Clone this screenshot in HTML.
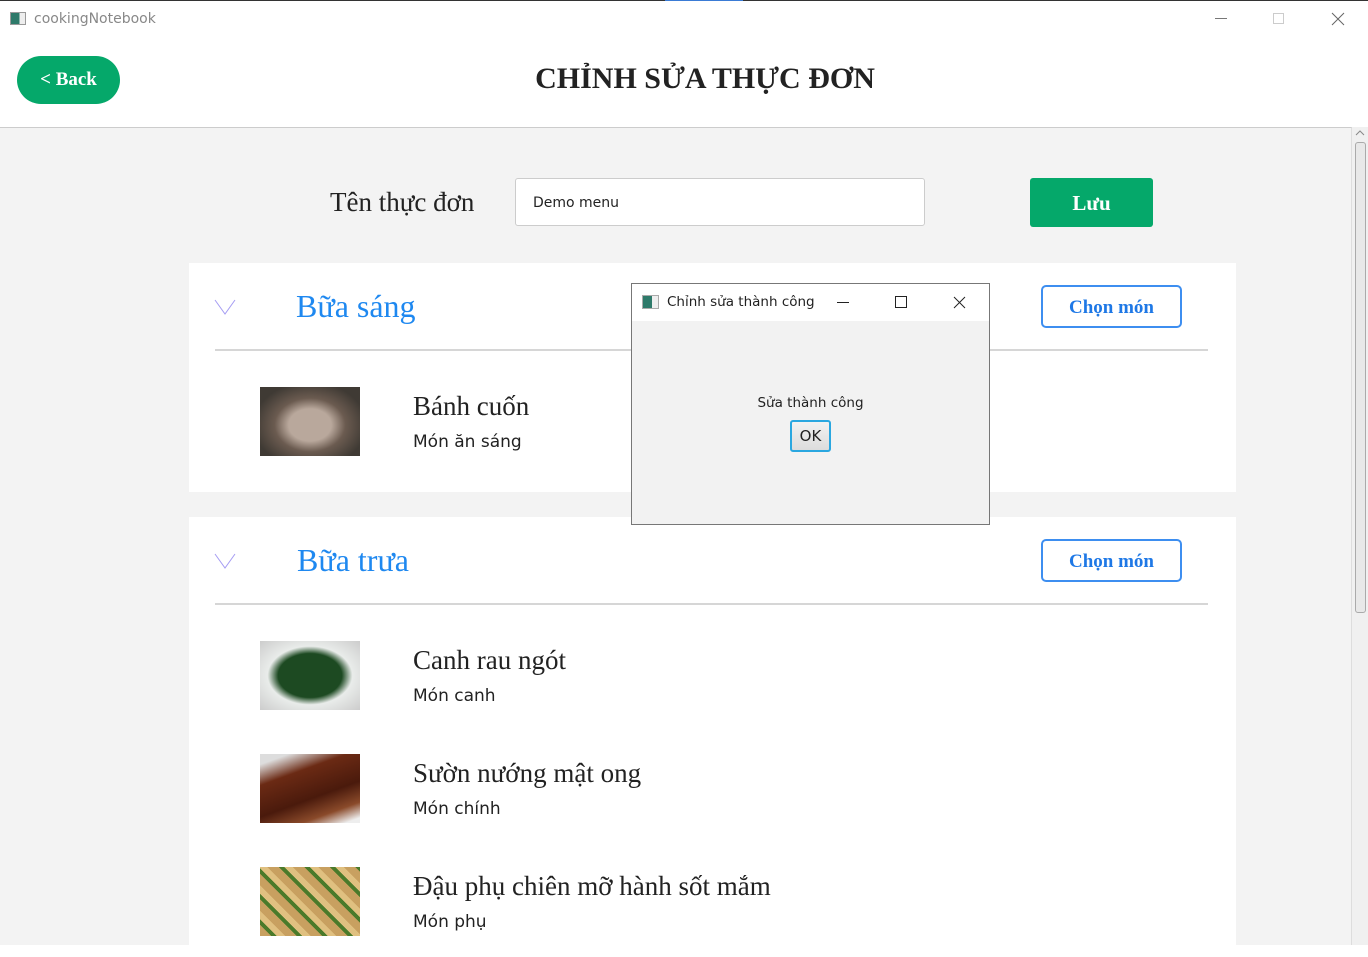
<!DOCTYPE html>
<html><head><meta charset="utf-8"><style>
*{margin:0;padding:0;box-sizing:border-box}
body{width:1368px;height:945px;overflow:hidden;background:#fff;position:relative;font-family:"Liberation Sans",sans-serif}
.abs{position:absolute}
.serif{font-family:"Liberation Serif",serif}
.seg{font-family:"DejaVu Sans","Liberation Sans",sans-serif}
.img{position:absolute;left:260px;width:100px;height:69px}
.name{position:absolute;left:413px;font-family:"Liberation Serif",serif;font-size:27px;color:#222}
.sub{position:absolute;left:413px;font-size:17px;color:#222;font-family:"DejaVu Sans",sans-serif}
.btn2{position:absolute;left:1041px;width:141px;height:43px;border:2px solid #3d8ef0;border-radius:5px;color:#1e78e6;font-family:"Liberation Serif",serif;font-weight:bold;font-size:19px;text-align:center;line-height:41px;background:#fff}
.chev{position:absolute;left:214px}
.h{position:absolute;font-family:"Liberation Serif",serif;font-size:32px;color:#1e88f0}
.div{position:absolute;left:215px;width:993px;height:2px;background:#d6d6d6}
</style></head><body>
<div class="abs" style="left:0;top:0;width:1368px;height:1px;background:#333"></div>
<div class="abs" style="left:665px;top:0;width:78px;height:1px;background:#3a7bd5"></div>
<div class="abs" style="left:10px;top:12px;width:16px;height:13px;border:1px solid #999;background:linear-gradient(90deg,#2e7a6a 60%,#eee 60%)"></div>
<div class="abs seg" style="left:34px;top:11px;font-size:14px;color:#888">cookingNotebook</div>
<div class="abs" style="left:1215px;top:18px;width:12px;height:1px;background:#777"></div>
<div class="abs" style="left:1273px;top:13px;width:11px;height:11px;border:1px solid #ccc"></div>
<svg class="abs" style="left:1331px;top:12px" width="14" height="14"><path d="M1 1L13 13M13 1L1 13" stroke="#666" stroke-width="1"/></svg>
<div class="abs serif" style="left:17px;top:56px;width:103px;height:48px;border-radius:24px;background:#05a86a;color:#fff;font-weight:bold;font-size:19px;text-align:center;line-height:48px">&lt; Back</div>
<div class="abs serif" style="left:0;width:1410px;top:62px;text-align:center;font-weight:bold;font-size:30px;color:#222">CHỈNH SỬA THỰC ĐƠN</div>
<div class="abs" style="left:0;top:127px;width:1352px;height:818px;background:#f3f3f3;border-top:1px solid #ccc;border-right:1px solid #ddd"></div>
<div class="abs" style="left:1352px;top:127px;width:16px;height:818px;background:#f0f0f0"></div>
<svg class="abs" style="left:1354px;top:128px" width="12" height="10"><path d="M2 7L6 3L10 7" stroke="#888" fill="none"/></svg>
<div class="abs" style="left:1355px;top:142px;width:11px;height:471px;border:1px solid #aaa;border-radius:3px;background:#e8e8e8"></div>
<div class="abs serif" style="left:330px;top:187px;font-size:27px;color:#222">Tên thực đơn</div>
<div class="abs seg" style="left:515px;top:178px;width:410px;height:48px;border:1px solid #ccc;border-radius:3px;background:#fff;font-size:14px;color:#222;padding-left:17px;line-height:48px">Demo menu</div>
<div class="abs serif" style="left:1030px;top:178px;width:123px;height:49px;background:#05a86a;border-radius:3px;color:#fff;font-weight:bold;font-size:21px;text-align:center;line-height:51px">Lưu</div>
<div class="abs" style="left:189px;top:263px;width:1047px;height:229px;background:#fff"></div>
<div class="abs" style="left:189px;top:517px;width:1047px;height:440px;background:#fff"></div>
<svg class="chev" style="top:298px" width="22" height="18"><path d="M1 2L11 16L21 2" stroke="#a59cf3" fill="none"/></svg>
<div class="h" style="left:296px;top:288px">Bữa sáng</div>
<div class="btn2" style="top:285px">Chọn món</div>
<div class="div" style="top:349px"></div>
<div class="img" style="top:387px;background:radial-gradient(ellipse at 50% 55%,#b9a89c 0 30%,#6b5b50 50%,#3f3a34 80%)"></div>
<div class="name" style="top:391px">Bánh cuốn</div>
<div class="sub" style="top:432px">Món ăn sáng</div>
<svg class="chev" style="top:552px" width="22" height="18"><path d="M1 2L11 16L21 2" stroke="#a59cf3" fill="none"/></svg>
<div class="h" style="left:297px;top:542px">Bữa trưa</div>
<div class="btn2" style="top:539px">Chọn món</div>
<div class="div" style="top:603px"></div>
<div class="img" style="top:641px;background:radial-gradient(ellipse at 50% 50%,#1d4a22 0 45%,#e9ecea 60%,#ccc 100%)"></div>
<div class="name" style="top:645px">Canh rau ngót</div>
<div class="sub" style="top:686px">Món canh</div>
<div class="img" style="top:754px;background:linear-gradient(160deg,#ddd 10%,#6b2a14 30%,#4a1a0c 60%,#8a4a2a 80%,#eee 95%)"></div>
<div class="name" style="top:758px">Sườn nướng mật ong</div>
<div class="sub" style="top:799px">Món chính</div>
<div class="img" style="top:867px;background:repeating-linear-gradient(45deg,#c8a060 0 8px,#4a7a2a 8px 12px,#e0c080 12px 18px)"></div>
<div class="name" style="top:871px">Đậu phụ chiên mỡ hành sốt mắm</div>
<div class="sub" style="top:912px">Món phụ</div>
<div class="abs" style="left:631px;top:283px;width:359px;height:242px;border:1px solid #777;background:#f2f2f2">
<div class="abs" style="left:0;top:0;width:357px;height:37px;background:#fff"></div>
<div class="abs" style="left:10px;top:11px;width:17px;height:14px;border:1px solid #aaa;background:linear-gradient(90deg,#2e7a6a 60%,#eee 60%)"></div>
<div class="abs seg" style="left:35px;top:10px;font-size:13.5px;color:#222">Chỉnh sửa thành công</div>
<div class="abs" style="left:205px;top:18px;width:12px;height:1px;background:#222"></div>
<div class="abs" style="left:263px;top:12px;width:12px;height:12px;border:1px solid #222"></div>
<svg class="abs" style="left:321px;top:12px" width="13" height="13"><path d="M1 1L12 12M12 1L1 12" stroke="#222"/></svg>
<div class="abs seg" style="left:0;width:357px;top:111px;text-align:center;font-size:13.5px;color:#222">Sửa thành công</div>
<div class="abs seg" style="left:158px;top:136px;width:41px;height:32px;border:2px solid #2aa7e0;border-radius:3px;background:linear-gradient(#f2f2f2,#dcdcdc);text-align:center;line-height:28px;font-size:15px;color:#222">OK</div>
</div>
</body></html>
